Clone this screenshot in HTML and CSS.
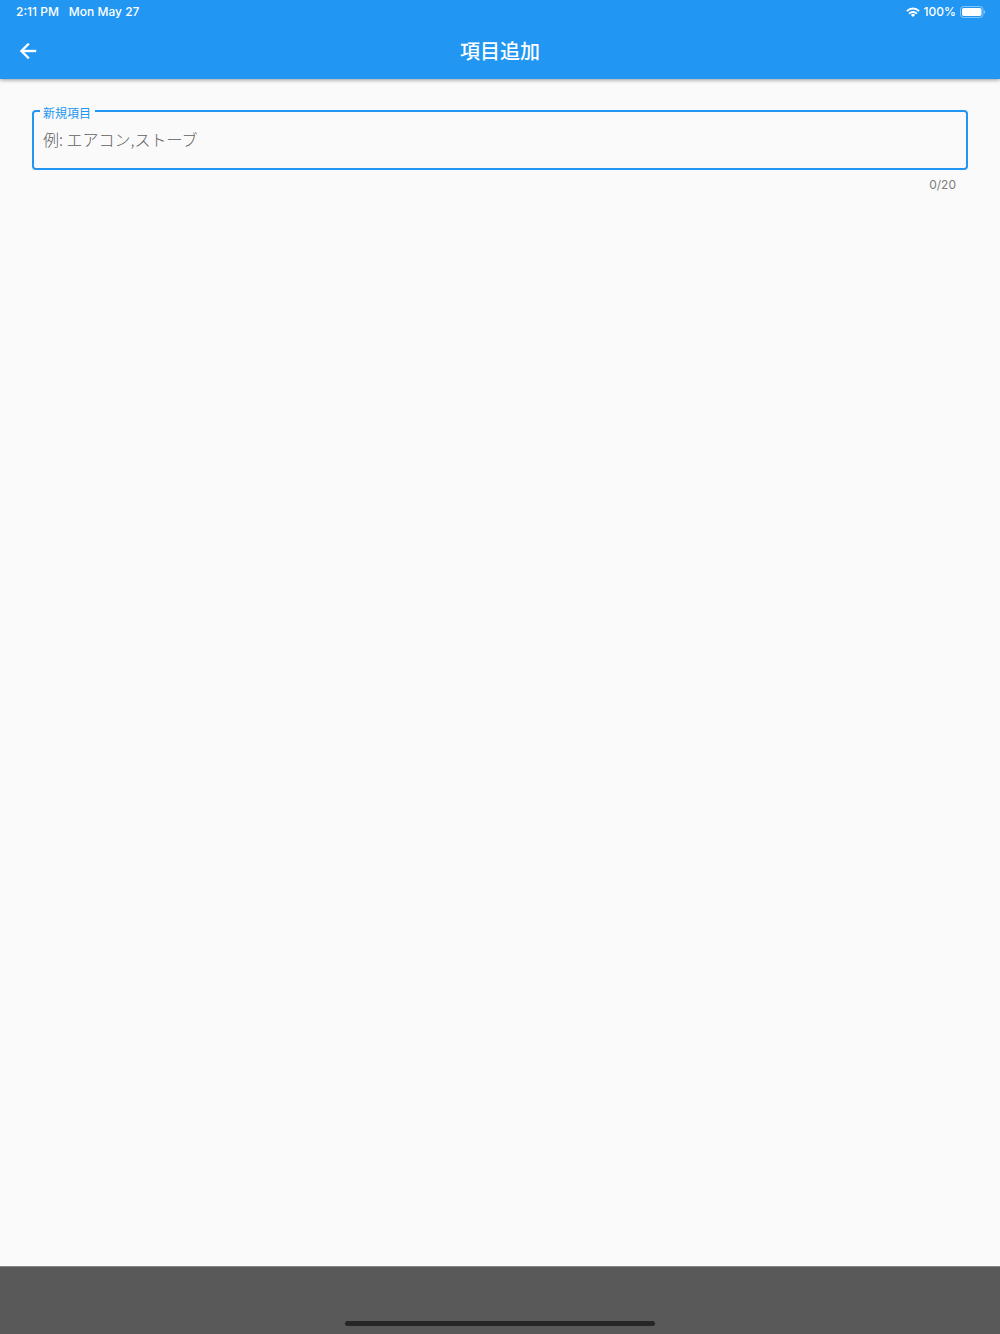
FILE: index.html
```html
<!DOCTYPE html>
<html lang="ja">
<head>
  <meta charset="utf-8">
  <meta name="viewport" content="width=device-width, initial-scale=1">
  <title>項目追加</title>
  <link rel="stylesheet" href="styles.css">
</head>
<body>
  <header class="app-header">
    <div class="status-bar">
      <div class="status-group status-clock">
        <span>2:11 PM</span>
        <span>Mon May 27</span>
      </div>
      <div class="status-group">
        <svg class="wifi-icon" viewBox="0 0 14 10" aria-hidden="true">
          <g fill="none" stroke="currentColor" stroke-width="2">
            <path d="M.9 4.1a8.7 8.7 0 0 1 12.2 0"/>
            <path d="M3.1 6.6a5.5 5.5 0 0 1 7.8 0"/>
          </g>
          <path fill="currentColor" d="M7 10 4.9 7.9a3 3 0 0 1 4.2 0z"/>
        </svg>
        <span>100%</span>
        <svg class="battery-icon" viewBox="0 0 26 12" aria-hidden="true">
          <rect x=".5" y=".5" width="22.5" height="11" rx="3.2" fill="none" stroke="currentColor" stroke-opacity=".45"/>
          <rect x="2" y="2" width="19.5" height="8" rx="1.8" fill="currentColor"/>
          <path d="M24 4.2c1.6.5 1.6 3.1 0 3.6z" fill="currentColor" fill-opacity=".5"/>
        </svg>
      </div>
    </div>
    <div class="toolbar">
      <button class="back-button" type="button" aria-label="戻る">
        <svg class="back-icon" viewBox="0 0 24 24" aria-hidden="true">
          <path fill="currentColor" stroke="currentColor" stroke-width=".4" d="M20 11H7.83l5.59-5.59L12 4l-8 8 8 8 1.41-1.41L7.83 13H20v-2z"/>
        </svg>
      </button>
      <h1 class="title">項目追加</h1>
    </div>
  </header>

  <main class="content">
    <fieldset class="field">
      <legend class="field-legend"><label for="item-name">新規項目</label></legend>
      <input class="field-input" id="item-name" type="text" maxlength="20" placeholder="例: エアコン,ストーブ" aria-describedby="item-count">
    </fieldset>
    <p class="counter" id="item-count">0/20</p>
  </main>

  <footer class="bottom-bar">
    <div class="home-indicator"></div>
  </footer>
</body>
</html>
```
FILE: styles.css
```css
* {
  box-sizing: border-box;
}

body {
  display: flex;
  flex-direction: column;
  min-height: 100vh;
  margin: 0;
  background: #fafafa;
  font-family: Inter, "Noto Sans CJK JP", sans-serif;
}

.app-header {
  background: #2196f3;
  color: #fff;
  box-shadow: 0 1px 4px rgba(0, 0, 0, 0.4);
}

.status-bar {
  display: flex;
  justify-content: space-between;
  align-items: center;
  height: 23px;
  padding: 0 14px 0 16px;
  font-size: 12px;
  font-weight: 500;
}

.status-group {
  display: flex;
  align-items: center;
  gap: 4px;
}

.status-clock {
  gap: 10px;
}

.wifi-icon {
  width: 14px;
  height: 10px;
}

.battery-icon {
  width: 26px;
  height: 12px;
}

.toolbar {
  display: grid;
  grid-template-columns: 56px 1fr 56px;
  align-items: center;
  height: 56px;
}

.back-button {
  display: flex;
  justify-content: center;
  padding: 12px;
  border: 0;
  background: none;
  color: inherit;
}

.back-icon {
  width: 24px;
  height: 24px;
}

.title {
  margin: 0;
  font-family: "Noto Sans CJK JP", sans-serif;
  font-size: 20px;
  font-weight: 500;
  line-height: 28px;
  text-align: center;
}

.content {
  flex: 1;
  padding: 22px 32px;
}

.field {
  margin: 0;
  padding: 0 0 12px;
  border: 2px solid #2196f3;
  border-radius: 4px;
}

.field-legend {
  margin-left: 6px;
  padding: 4px 4px 0 3px;
  color: #2196f3;
  font-family: "Noto Sans CJK JP", sans-serif;
  font-size: 12px;
  line-height: 16px;
}

.field-input {
  display: block;
  width: 100%;
  height: 35px;
  padding: 0 9px;
  border: 0;
  outline: 0;
  background: none;
  color: #212121;
  font-family: "Noto Sans CJK JP", sans-serif;
  font-size: 16px;
}

.field-input::placeholder {
  color: #606060;
  font-weight: 300;
  opacity: 1;
}

.counter {
  margin: 7px 12px 0;
  color: #7d7d7d;
  font-size: 12px;
  line-height: 16px;
  text-align: right;
}

.bottom-bar {
  display: flex;
  justify-content: center;
  align-items: flex-end;
  height: 68px;
  padding-bottom: 8px;
  border-top: 1px solid #858585;
  background: #595959;
}

.home-indicator {
  width: 31%;
  height: 5px;
  border-radius: 3px;
  background: #262626;
}
```
